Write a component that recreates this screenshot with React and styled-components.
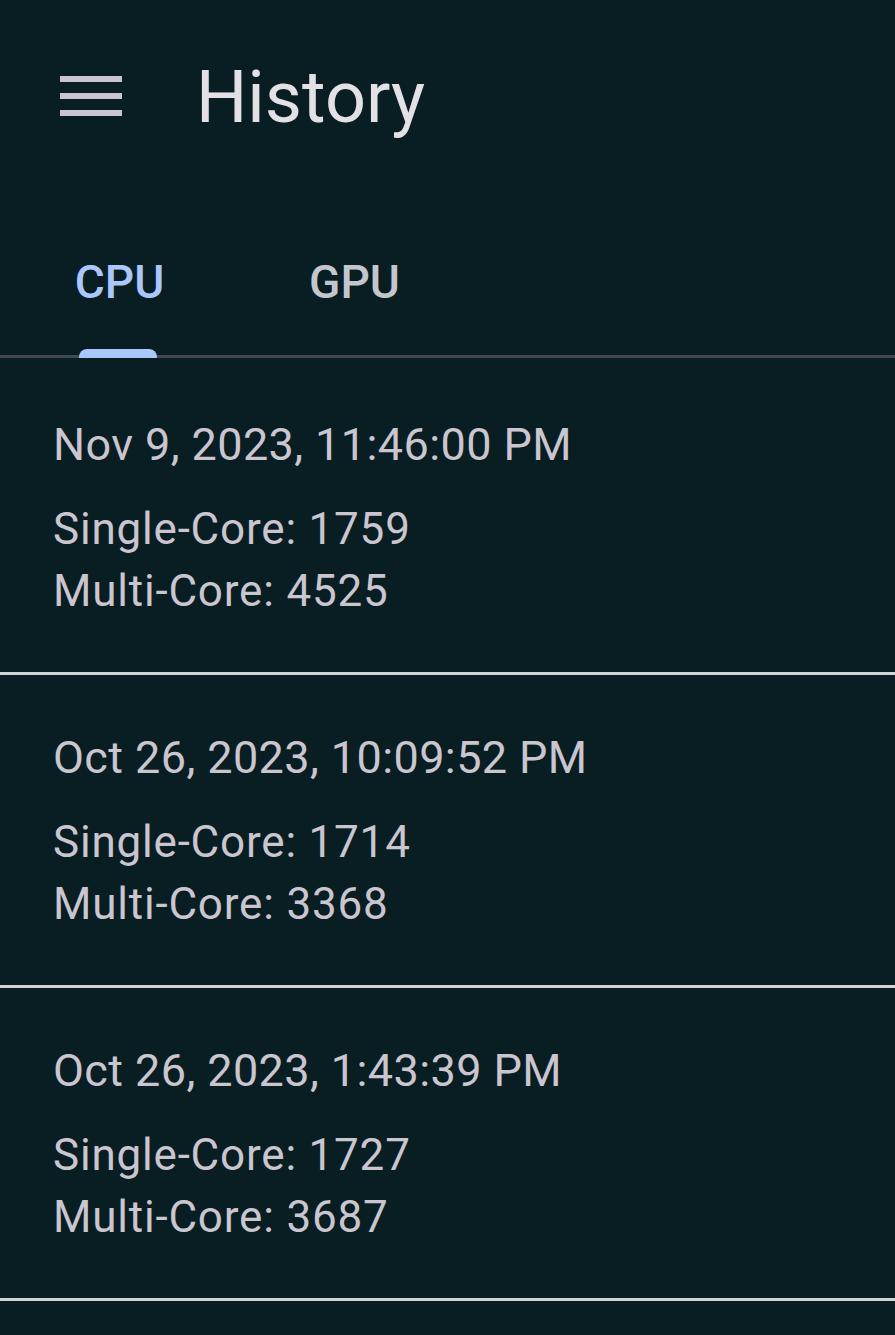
import styled, { createGlobalStyle } from "styled-components";

const GlobalStyle = createGlobalStyle`
  html, body {
    margin: 0;
    padding: 0;
    background: #081e22;
  }
  body {
    font-family: Roboto, "Noto Sans", sans-serif;
  }
`;

const Screen = styled.div`
  width: 895px;
  min-height: 1335px;
  background: #081e22;
  overflow: hidden;
`;

const TopBar = styled.header`
  height: 196px;
  display: flex;
  align-items: center;
  padding-left: 60px;
  box-sizing: border-box;
`;

const MenuButton = styled.div`
  width: 62px;
  display: flex;
  flex-direction: column;
  gap: 11px;
  margin-top: -4px;
  span {
    display: block;
    height: 6px;
    background: #cac4d0;
  }
`;

const Title = styled.h1`
  margin: 0 0 0 74px;
  font-size: 72px;
  font-weight: 400;
  color: #e3e1e6;
  line-height: 1.2;
`;

const TabBar = styled.nav`
  display: flex;
  height: 159px;
  padding-left: 2px;
  border-bottom: 3px solid #42484b;
`;

const Tab = styled.div`
  position: relative;
  width: 235px;
  padding-top: 59px;
  box-sizing: border-box;
  text-align: center;
  font-size: 46px;
  font-weight: 500;
  line-height: 54px;
  color: ${(props) => (props.active ? "#abc6fb" : "#c3c6cd")};
`;

const Indicator = styled.div`
  position: absolute;
  left: 50%;
  bottom: -3px;
  transform: translateX(-41px);
  width: 78px;
  height: 9px;
  border-radius: 8px 8px 0 0;
  background: #abc6fb;
`;

const List = styled.div`
  padding-top: 4px;
`;

const Entry = styled.div`
  padding: 52px 53px 50px;
  border-bottom: 3px solid #d0d3d4;
  color: #cac5cf;
`;

const EntryDate = styled.div`
  font-size: 45px;
  line-height: 62px;
  letter-spacing: 0.4px;
  margin-bottom: 22px;
`;

const Score = styled.div`
  font-size: 44px;
  line-height: 62px;
  letter-spacing: 0.8px;
`;

const entries = [
  { date: "Nov 9, 2023, 11:46:00 PM", single: 1759, multi: 4525 },
  { date: "Oct 26, 2023, 10:09:52 PM", single: 1714, multi: 3368 },
  { date: "Oct 26, 2023, 1:43:39 PM", single: 1727, multi: 3687 },
];

export default function App() {
  return (
    <Screen>
      <GlobalStyle />
      <TopBar>
        <MenuButton>
          <span />
          <span />
          <span />
        </MenuButton>
        <Title>History</Title>
      </TopBar>
      <TabBar>
        <Tab active>
          CPU
          <Indicator />
        </Tab>
        <Tab>GPU</Tab>
      </TabBar>
      <List>
        {entries.map((e) => (
          <Entry key={e.date}>
            <EntryDate>{e.date}</EntryDate>
            <Score>Single-Core: {e.single}</Score>
            <Score>Multi-Core: {e.multi}</Score>
          </Entry>
        ))}
      </List>
    </Screen>
  );
}
